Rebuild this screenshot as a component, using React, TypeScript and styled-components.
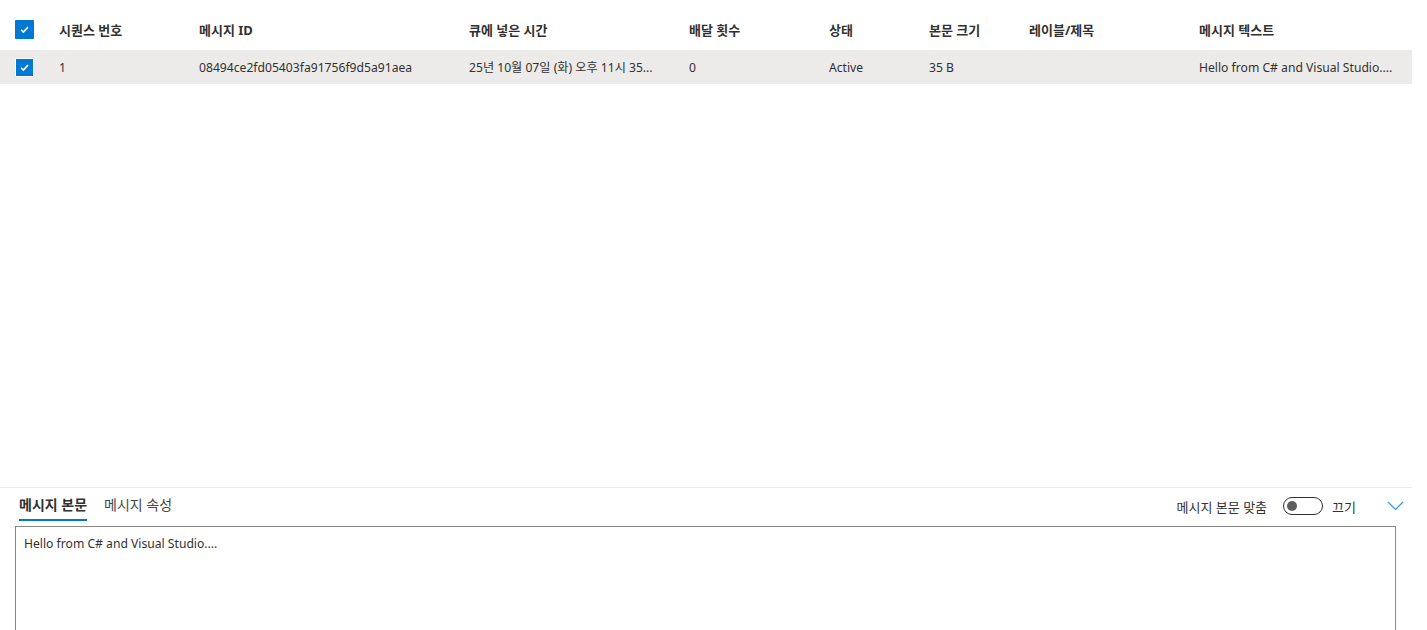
import React from "react";
import styled, { createGlobalStyle } from "styled-components";

const Global = createGlobalStyle`
  html, body { margin: 0; padding: 0; background: #ffffff; }
  body {
    font-family: "Noto Sans", "Noto Sans CJK KR", sans-serif;
    color: #323130;
    overflow: hidden;
  }
`;

const Page = styled.div`
  width: 1412px;
  height: 630px;
  display: flex;
  flex-direction: column;
`;

const TableArea = styled.div`
  flex: 1;
  display: flex;
  flex-direction: column;
`;

const COLS = "59px 140px 270px 220px 140px 100px 100px 170px 1fr";

const HeaderRow = styled.div`
  display: grid;
  grid-template-columns: ${COLS};
  align-items: center;
  height: 42px;
  margin-top: 8px;
`;

const DataRow = styled.div<{ $selected?: boolean }>`
  display: grid;
  grid-template-columns: ${COLS};
  align-items: center;
  height: 34px;
  background: ${(p) => (p.$selected ? "#edebe9" : "transparent")};
`;

const CheckCell = styled.div`
  display: flex;
  align-items: center;
  padding-left: 15px;
`;

const Box = styled.div<{ $bordered?: boolean }>`
  width: 19px;
  height: 19px;
  box-sizing: border-box;
  background: #0078d4;
  border-radius: 1px;
  border: ${(p) => (p.$bordered ? "1px solid #ffffff" : "none")};
  display: flex;
  align-items: center;
  justify-content: center;
`;

const HeadCell = styled.div`
  font-family: "Noto Sans", "Noto Sans CJK KR", sans-serif;
  font-size: 13px;
  font-weight: 700;
  color: #323130;
  white-space: nowrap;
  overflow: hidden;
`;

const Cell = styled.div`
  font-size: 12.15px;
  color: #323130;
  white-space: nowrap;
  overflow: hidden;
  text-overflow: ellipsis;
  padding-right: 12px;
`;

const Bottom = styled.div`
  height: 142px;
  border-top: 1px solid #edebe9;
  display: flex;
  flex-direction: column;
`;

const TabBar = styled.div`
  display: flex;
  align-items: flex-start;
  justify-content: space-between;
  height: 38px;
  padding-left: 19px;
  padding-right: 8px;
`;

const Tabs = styled.div`
  display: flex;
  gap: 17px;
`;

const Tab = styled.div<{ $active?: boolean }>`
  font-size: 14px;
  font-weight: ${(p) => (p.$active ? 700 : 400)};
  color: ${(p) => (p.$active ? "#323130" : "#484644")};
  padding-top: 8px;
  line-height: 18px;
  height: 23px;
  box-sizing: content-box;
  border-bottom: 2px solid ${(p) => (p.$active ? "#0078d4" : "transparent")};
`;

const Controls = styled.div`
  display: flex;
  align-items: center;
  height: 36px;
`;

const ControlLabel = styled.span`
  font-size: 13px;
  color: #323130;
`;

const Toggle = styled.div`
  width: 40px;
  height: 18px;
  box-sizing: border-box;
  border: 1px solid #323130;
  border-radius: 10px;
  margin-left: 16px;
  margin-right: 9px;
  display: flex;
  align-items: center;
  padding-left: 3px;
`;

const Knob = styled.div`
  width: 10px;
  height: 10px;
  border-radius: 50%;
  background: #605e5c;
`;

const Chevron = styled.div`
  margin-left: 31px;
  display: flex;
  align-items: center;
`;

const BodyBox = styled.div`
  margin-left: 15px;
  width: 1381px;
  flex: 1;
  box-sizing: border-box;
  border: 1px solid #8a8886;
  border-bottom: none;
  padding: 8px 8px;
  font-size: 12.15px;
  color: #323130;
`;

const Check = () => (
  <svg width="11" height="11" viewBox="0 0 12 12">
    <path d="M2.2 6.3 L4.8 8.8 L9.8 3.4" fill="none" stroke="#ffffff" strokeWidth="1.8" />
  </svg>
);

const headers = ["시퀀스 번호", "메시지 ID", "큐에 넣은 시간", "배달 횟수", "상태", "본문 크기", "레이블/제목", "메시지 텍스트"];
const row = [
  "1",
  "08494ce2fd05403fa91756f9d5a91aea",
  "25년 10월 07일 (화) 오후 11시 35...",
  "0",
  "Active",
  "35 B",
  "",
  "Hello from C# and Visual Studio....",
];

export default function App() {
  return (
    <>
      <Global />
      <Page>
        <TableArea>
          <HeaderRow>
            <CheckCell>
              <Box>
                <Check />
              </Box>
            </CheckCell>
            {headers.map((h) => (
              <HeadCell key={h}>{h}</HeadCell>
            ))}
          </HeaderRow>
          <DataRow $selected>
            <CheckCell>
              <Box $bordered>
                <Check />
              </Box>
            </CheckCell>
            {row.map((c, i) => (
              <Cell key={i}>{c}</Cell>
            ))}
          </DataRow>
        </TableArea>
        <Bottom>
          <TabBar>
            <Tabs>
              <Tab $active>메시지 본문</Tab>
              <Tab>메시지 속성</Tab>
            </Tabs>
            <Controls>
              <ControlLabel>메시지 본문 맞춤</ControlLabel>
              <Toggle>
                <Knob />
              </Toggle>
              <ControlLabel>끄기</ControlLabel>
              <Chevron>
                <svg width="17" height="10" viewBox="0 0 17 10">
                  <path d="M1 1 L8.5 8.5 L16 1" fill="none" stroke="#3a96dd" strokeWidth="1.2" />
                </svg>
              </Chevron>
            </Controls>
          </TabBar>
          <BodyBox>Hello from C# and Visual Studio....</BodyBox>
        </Bottom>
      </Page>
    </>
  );
}
